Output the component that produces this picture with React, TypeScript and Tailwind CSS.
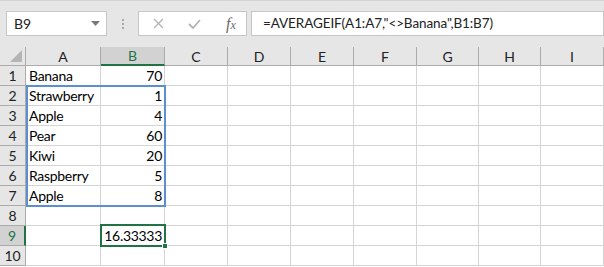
import React from 'react';

const cols = ['A', 'B', 'C', 'D', 'E', 'F', 'G', 'H', 'I'];

const data: Record<number, [string, string]> = {
  1: ['Banana', '70'],
  2: ['Strawberry', '1'],
  3: ['Apple', '4'],
  4: ['Pear', '60'],
  5: ['Kiwi', '20'],
  6: ['Raspberry', '5'],
  7: ['Apple', '8'],
  9: ['', '16.33333'],
};

const gridCols = 'grid-cols-[26px_75px_64px_63px_63px_63px_63px_62px_62px_63px]';

function Toolbar() {
  return (
    <div className="h-[47px] bg-[#e6e6e6] border-t border-[#d4d4d4] flex items-start pt-[10px]">
      {/* name box */}
      <div className="ml-[6px] w-[101px] h-[25px] bg-white border border-[#c6c6c6] flex items-center justify-between pl-[7px] pr-[6px] text-[14px] text-[#222]">
        <span>B9</span>
        <svg width="9" height="5" viewBox="0 0 9 5">
          <path d="M0 0 L9 0 L4.5 5 Z" fill="#7a7a7a" />
        </svg>
      </div>
      {/* grip dots */}
      <div className="ml-[15px] mt-[8px] flex flex-col gap-[2px]">
        <div className="w-[2px] h-[2px] bg-[#a8a8a8]" />
        <div className="w-[2px] h-[2px] bg-[#a8a8a8]" />
        <div className="w-[2px] h-[2px] bg-[#a8a8a8]" />
      </div>
      {/* cancel / enter / fx */}
      <div className="ml-[14px] w-[109px] h-[25px] bg-white border border-[#c6c6c6] flex items-center">
        <svg className="ml-[14px]" width="11" height="11" viewBox="0 0 11 11">
          <path d="M1 1 L10 10 M10 1 L1 10" stroke="#b4b4b4" strokeWidth="1.4" />
        </svg>
        <svg className="ml-[24px]" width="13" height="10" viewBox="0 0 13 10">
          <path d="M1 5 L5 9 L12 1" stroke="#b4b4b4" strokeWidth="1.8" fill="none" />
        </svg>
        <span className="ml-[25px] font-['Liberation_Serif',serif] italic text-[16px] text-[#6a6a6a] leading-none">
          f<span className="text-[12px]">x</span>
        </span>
      </div>
      <div className="ml-[4px] flex-1 h-[25px] bg-white border border-[#c6c6c6] flex items-center pl-[11px] text-[13.5px] tracking-[-0.1px] text-[#222]">
        =AVERAGEIF(A1:A7,"&lt;&gt;Banana",B1:B7)
      </div>
    </div>
  );
}

function Sheet() {
  const rows = Array.from({ length: 10 }, (_, i) => i + 1);
  return (
    <div className="relative">
      <div className={`grid ${gridCols}`}>
        {/* corner */}
        <div className="h-[19px] bg-[#e6e6e6] border-r border-b border-[#ababab] relative">
          <svg className="absolute right-[3px] bottom-[3px]" width="12" height="12" viewBox="0 0 12 12">
            <path d="M12 0 L12 12 L0 12 Z" fill="#b4b4b4" />
          </svg>
        </div>
        {cols.map((c) =>
          c === 'B' ? (
            <div
              key={c}
              className="h-[19px] bg-[#d2d2d2] border-r border-[#ababab] border-b-2 border-b-[#217346] flex items-center justify-center text-[#217346]"
            >
              {c}
            </div>
          ) : (
            <div
              key={c}
              className="h-[19px] bg-[#e6e6e6] border-r border-b border-[#ababab] flex items-center justify-center text-[#222]"
            >
              {c}
            </div>
          )
        )}
        {rows.map((r) => (
          <React.Fragment key={r}>
            {r === 9 ? (
              <div className="h-[20px] bg-[#d2d2d2] border-r-2 border-r-[#217346] border-b border-b-[#ababab] flex items-center justify-center text-[#217346]">
                {r}
              </div>
            ) : (
              <div className="h-[20px] bg-[#e6e6e6] border-r border-b border-[#ababab] flex items-center justify-center text-[#222]">
                {r}
              </div>
            )}
            {cols.map((c, ci) => {
              const v = data[r];
              const text = v && ci < 2 ? v[ci] : '';
              return (
                <div
                  key={c}
                  className={`h-[20px] bg-white border-r border-b border-[#d4d4d4] flex items-center pl-[3px] pr-[2px] tracking-[-0.3px] text-black ${ci === 1 ? 'justify-end' : 'justify-start'}`}
                >
                  {text}
                </div>
              );
            })}
          </React.Fragment>
        ))}
      </div>
      {/* blue referenced range A2:B7 */}
      <div className="absolute left-[26px] top-[38px] w-[140px] h-[122px] border-2 border-[#5b8fd0] pointer-events-none" />
      {/* active cell B9 */}
      <div className="absolute left-[100px] top-[177px] w-[66px] h-[23px] border-2 border-[#217346] pointer-events-none">
        <div className="absolute right-[-4px] bottom-[-4px] w-[6px] h-[6px] bg-[#217346] border border-white" />
      </div>
    </div>
  );
}

export default function App() {
  return (
    <div className="w-[604px] h-[267px] overflow-hidden bg-white font-['Lato',sans-serif] text-[14px]">
      <Toolbar />
      <Sheet />
    </div>
  );
}
